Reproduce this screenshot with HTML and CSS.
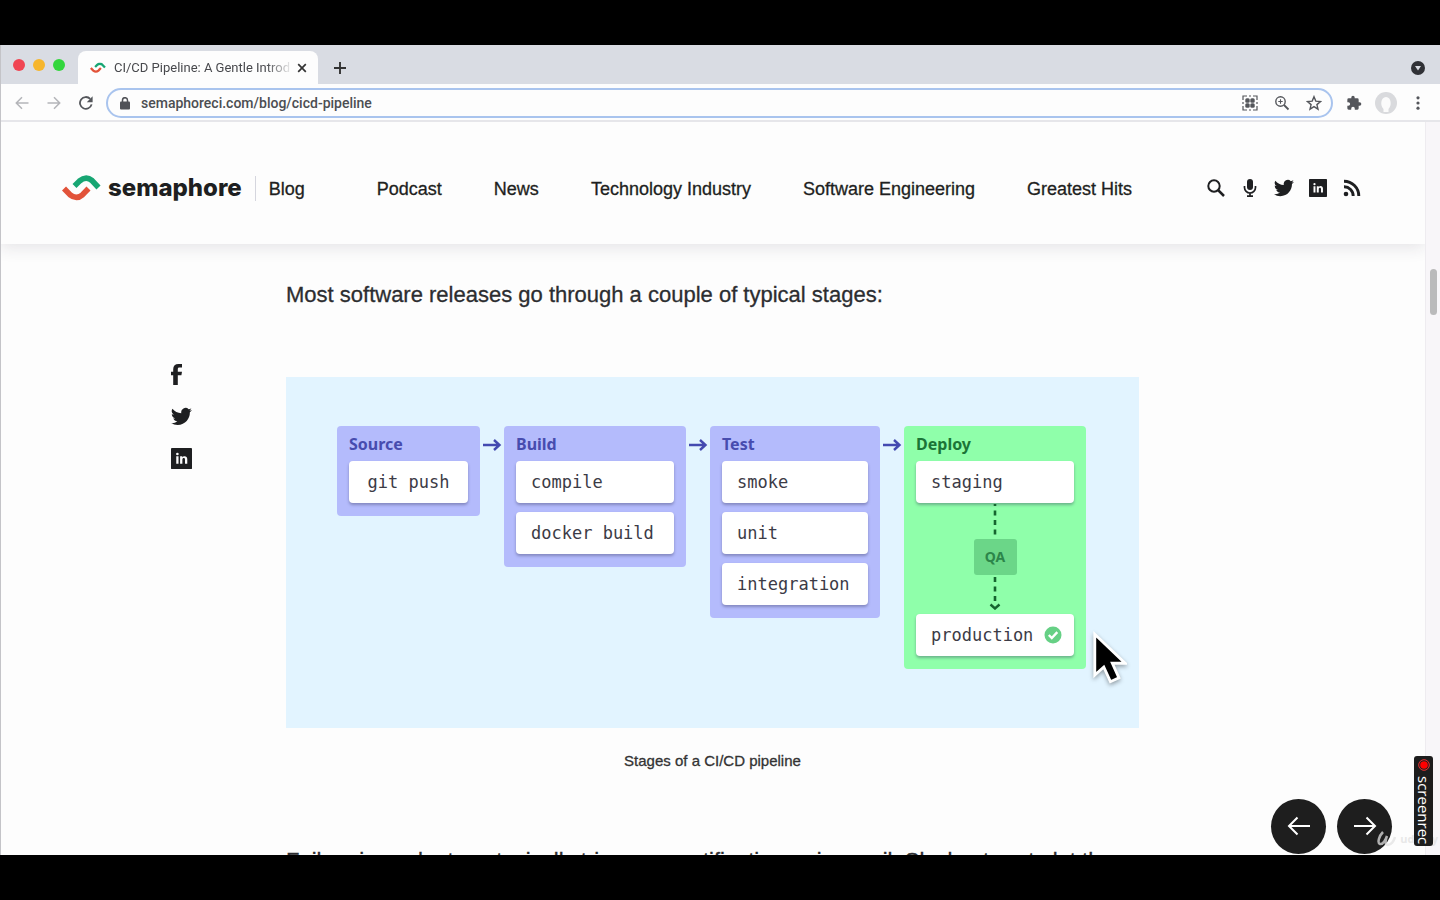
FILE: index.html
```html
<!DOCTYPE html>
<html lang="en">
<head>
<meta charset="utf-8">
<title>CI/CD Pipeline: A Gentle Introduction</title>
<link rel="stylesheet" href="styles.css">
</head>
<body>
<svg class="defs" aria-hidden="true">
  <symbol id="swirl" viewBox="0 0 39 27">
    <path d="M12.5 11 L17.5 6 Q24 .5 30 5.500 L36.500 12.500" fill="none" stroke="#17a673" stroke-width="5.600"/>
    <path d="M2 13.500 L8 19.800 Q14.500 25 20.500 19.800 L26.500 13.500" fill="none" stroke="#e2533a" stroke-width="5.600"/>
  </symbol>
  <symbol id="twitter" viewBox="0 0 24 24"><path d="M23.95 4.57a10 10 0 0 1-2.82.78 4.96 4.96 0 0 0 2.16-2.73c-.95.56-2 .96-3.13 1.19a4.92 4.92 0 0 0-8.38 4.48C7.69 8.1 4.07 6.13 1.64 3.16a4.92 4.92 0 0 0 1.52 6.57 4.9 4.9 0 0 1-2.23-.61v.06a4.92 4.92 0 0 0 3.95 4.83 5 5 0 0 1-2.21.08 4.94 4.94 0 0 0 4.6 3.42A9.87 9.87 0 0 1 0 19.54a14 14 0 0 0 7.55 2.21c9.05 0 14-7.5 14-13.98l-.02-.63a9.94 9.94 0 0 0 2.42-2.57z"/></symbol>
  <symbol id="linkedin" viewBox="0 0 24 24"><path fill-rule="evenodd" d="M1 0h22Q24 0 24 1v22q0 1-1 1h-22Q0 24 0 23v-22Q0 0 1 0zM6 9.500V18h2.600V9.500zM7.300 5.400a1.500 1.500 0 1 0 0 3 1.500 1.500 0 0 0 0-3zM10.400 9.500V18H13v-4.500c0-1.300.6-2 1.600-2s1.400.7 1.400 2V18h2.600v-5.200c0-2.300-1.200-3.500-3-3.500-1.200 0-2.100.5-2.600 1.400V9.500z"/></symbol>
  <symbol id="arrow" viewBox="0 0 20 16"><path d="M1 8h16M12 3l5.500 5-5.500 5" fill="none" stroke="currentColor" stroke-width="2.400"/></symbol>
  <symbol id="thin-arrow" viewBox="0 0 24 20"><path d="M1 10h21M13.500 1.500 22 10l-8.500 8.500" fill="none" stroke="currentColor" stroke-width="2"/></symbol>
</svg>

<div class="browser">
  <div class="tabstrip">
    <div class="lights"><i class="light red"></i><i class="light yellow"></i><i class="light green"></i></div>
    <div class="tab">
      <svg class="favicon" viewBox="0 0 39 27"><use href="#swirl"/></svg>
      <span class="tab-title">CI/CD Pipeline: A Gentle Introd</span>
      <button class="icon-btn close" aria-label="Close tab"><svg viewBox="0 0 10 10"><path d="M1.200 1.200l7.600 7.600M8.800 1.200L1.200 8.800" stroke="currentColor" stroke-width="1.700"/></svg></button>
    </div>
    <button class="icon-btn new-tab" aria-label="New tab"><svg viewBox="0 0 12 12"><path d="M6 0v12M0 6h12" stroke="currentColor" stroke-width="1.900"/></svg></button>
    <button class="icon-btn search-tabs" aria-label="Search tabs"><svg viewBox="0 0 14 14"><circle cx="7" cy="7" r="7" fill="#303136"/><path d="M4 5h6L7 9.500z" fill="#d9dce3"/></svg></button>
  </div>

  <div class="toolbar">
    <button class="icon-btn nav-btn dim" aria-label="Back"><svg viewBox="0 0 14 14"><path d="M13.500 7H1.500M7 1.200 1.300 7 7 12.800" fill="none" stroke="currentColor" stroke-width="1.500"/></svg></button>
    <button class="icon-btn nav-btn dim" aria-label="Forward"><svg viewBox="0 0 14 14"><path d="M.5 7h12M7 1.200 12.700 7 7 12.800" fill="none" stroke="currentColor" stroke-width="1.500"/></svg></button>
    <button class="icon-btn nav-btn" aria-label="Reload"><svg viewBox="0 0 14 14"><path d="M12.600 8.400A5.900 5.900 0 1 1 11.200 2.900" fill="none" stroke="currentColor" stroke-width="1.800"/><path d="M13.600.3v5.900H7.800z" fill="currentColor"/></svg></button>
    <div class="omnibox">
      <svg class="lock" viewBox="0 0 10 13"><rect y="4.500" width="10" height="8" rx="1" fill="currentColor"/><path d="M2.500 5V3.200a2.500 2.500 0 0 1 5 0V5" fill="none" stroke="currentColor" stroke-width="1.500"/></svg>
      <input class="url" type="text" aria-label="Address" value="semaphoreci.com/blog/cicd-pipeline">
      <button class="icon-btn" aria-label="QR code"><svg viewBox="0 0 16 16"><g fill="none" stroke="currentColor" stroke-width="1.200"><path d="M1 5V1h4M11 1h4v4M15 11v4h-4M5 15H1v-4M7 1h2M7 15h2M1 7v2M15 7v2"/></g><g fill="currentColor"><rect x="3.300" y="3.300" width="4.400" height="4.400" rx="1.500"/><rect x="8.300" y="3.300" width="4.400" height="4.400" rx="1.500"/><rect x="3.300" y="8.300" width="4.400" height="4.400" rx="1.500"/><rect x="8.300" y="8.300" width="4.400" height="4.400" rx="1.500"/></g></svg></button>
      <button class="icon-btn" aria-label="Zoom"><svg viewBox="0 0 16 16"><g fill="none" stroke="currentColor"><circle cx="6.500" cy="6.500" r="4.700" stroke-width="1.400"/><path d="M10 10l4.500 4.500" stroke-width="1.800"/><path d="M4.300 6.500h4.400M6.500 4.300v4.400" stroke-width="1.100"/></g></svg></button>
      <button class="icon-btn" aria-label="Bookmark"><svg viewBox="0 0 16 16"><path d="M8 1.700l1.800 4.400 4.700.4-3.600 3.100 1.100 4.600L8 11.700l-4 2.500 1.100-4.600-3.600-3.100 4.700-.4z" fill="none" stroke="currentColor" stroke-width="1.400"/></svg></button>
    </div>
    <button class="icon-btn" aria-label="Extensions"><svg viewBox="0 0 24 24"><path fill="currentColor" d="M20.500 11H19V7a2 2 0 0 0-2-2h-4V3.500a2.500 2.500 0 0 0-5 0V5H4a2 2 0 0 0-2 2v3.800h1.500a2.700 2.700 0 0 1 0 5.400H2V20a2 2 0 0 0 2 2h3.800v-1.500a2.700 2.700 0 0 1 5.400 0V22H17a2 2 0 0 0 2-2v-4h1.500a2.500 2.500 0 0 0 0-5z"/></svg></button>
    <button class="icon-btn avatar" aria-label="Profile"><svg viewBox="0 0 22 22"><circle cx="11" cy="11" r="11" fill="#d9dadd"/><path d="M8.500 20v-3C5 14 5.500 5 11 5s6 9 2.500 12v3z" fill="#fbfbfb"/></svg></button>
    <button class="icon-btn" aria-label="Menu"><svg viewBox="0 0 16 16"><g fill="currentColor"><circle cx="8" cy="2.800" r="1.600"/><circle cx="8" cy="8" r="1.600"/><circle cx="8" cy="13.200" r="1.600"/></g></svg></button>
  </div>

  <div class="viewport">
    <div class="page">
      <header class="site-header">
        <a class="brand" href="#"><svg class="brand-mark" viewBox="0 0 39 27"><use href="#swirl"/></svg>semaphore</a>
        <a class="blog" href="#">Blog</a>
        <nav class="links">
          <a href="#">Podcast</a><a href="#">News</a><a href="#">Technology Industry</a><a href="#">Software Engineering</a><a href="#">Greatest Hits</a>
        </nav>
        <div class="social">
          <a href="#" aria-label="Search"><svg viewBox="0 0 18 18"><circle cx="7" cy="7" r="5.700" fill="none" stroke="currentColor" stroke-width="2"/><path d="M11 11l6 6" stroke="currentColor" stroke-width="2.500"/></svg></a>
          <a href="#" aria-label="Podcast feed"><svg viewBox="0 0 18 18"><rect x="6" y="0" width="6" height="11" rx="3" fill="currentColor"/><path d="M3.500 7v1.500a5.500 5.500 0 0 0 11 0V7M9 14v3M6 17.100h6" fill="none" stroke="currentColor" stroke-width="1.700"/></svg></a>
          <a class="large" href="#" aria-label="Twitter"><svg viewBox="0 0 24 24"><use href="#twitter" fill="currentColor"/></svg></a>
          <a href="#" aria-label="LinkedIn"><svg viewBox="0 0 24 24"><use href="#linkedin" fill="currentColor"/></svg></a>
          <a href="#" aria-label="RSS"><svg viewBox="0 0 18 18"><circle cx="3" cy="15" r="2.300" fill="currentColor"/><path d="M1 7.800a9 9 0 0 1 9.200 9.200M1 2.200A14.800 14.800 0 0 1 15.800 17" fill="none" stroke="currentColor" stroke-width="2.900"/></svg></a>
        </div>
      </header>

      <main class="article">
        <aside class="share">
          <a href="#" aria-label="Share on Facebook"><svg class="fb" viewBox="0 0 11 21"><path fill="currentColor" d="M2.200 21V11.200H0V7.700h2.200V5.200C2.200 1.800 4.200 0 7.500 0H11v3.500H8.500c-1.300 0-1.700.6-1.700 1.800v2.400H11l-.6 3.500H6.800V21z"/></svg></a>
          <a href="#" aria-label="Share on Twitter"><svg viewBox="0 0 24 24"><use href="#twitter" fill="currentColor"/></svg></a>
          <a href="#" aria-label="Share on LinkedIn"><svg viewBox="0 0 24 24"><use href="#linkedin" fill="currentColor"/></svg></a>
        </aside>
        <div class="post">
          <p>Most software releases go through a couple of typical stages:</p>
          <figure class="figure">
            <div class="diagram">
              <section class="stage source"><h3>Source</h3><div class="step">git push</div></section>
              <svg class="arrow" viewBox="0 0 20 16"><use href="#arrow"/></svg>
              <section class="stage build"><h3>Build</h3><div class="step">compile</div><div class="step">docker build</div></section>
              <svg class="arrow" viewBox="0 0 20 16"><use href="#arrow"/></svg>
              <section class="stage test"><h3>Test</h3><div class="step">smoke</div><div class="step">unit</div><div class="step">integration</div></section>
              <svg class="arrow" viewBox="0 0 20 16"><use href="#arrow"/></svg>
              <section class="stage deploy"><h3>Deploy</h3><div class="step">staging</div>
                <div class="gate">
                  <svg class="dash" viewBox="0 0 12 35"><path d="M6 0v33" stroke="#15652f" stroke-width="2.600" stroke-dasharray="5 4.500" stroke-dashoffset="3"/></svg>
                  <span class="qa">QA</span>
                  <svg class="dash" viewBox="0 0 12 35"><path d="M6 2v26" stroke="#15652f" stroke-width="2.600" stroke-dasharray="5 4.500"/><path d="M1.500 29.500 6 33.500l4.500-4" fill="none" stroke="#15652f" stroke-width="2.400"/></svg>
                </div>
                <div class="step">production<svg class="check" viewBox="0 0 18 18"><circle cx="9" cy="9" r="8.500" fill="#66d085"/><path d="M4.800 9l3 3 5.500-5.800" fill="none" stroke="#fff" stroke-width="2.400"/></svg></div>
              </section>
              <svg class="pointer" viewBox="0 0 38 56"><path d="M4 3v43l9.500-8.500 7 15.500 9-4-7-15.500H36z" fill="#000" stroke="#fff" stroke-width="3"/></svg>
            </div>
            <figcaption>Stages of a CI/CD pipeline</figcaption>
          </figure>
          <p>Failure in each stage typically triggers a notification—via email, Slack, etc.—to let the responsible developers know about the cause.</p>
        </div>
      </main>
    </div>
    <div class="scrollbar"><div class="thumb"></div></div>
    <div class="pager">
      <button class="round" aria-label="Previous"><svg class="flip" viewBox="0 0 24 20"><use href="#thin-arrow"/></svg></button>
      <button class="round" aria-label="Next"><svg viewBox="0 0 24 20"><use href="#thin-arrow"/></svg></button>
    </div>
    <div class="watermark"><svg viewBox="0 0 20 16"><path d="M7 1C3 5 1 12 4 13s6-5 7-8c-2 5-2 9 1 9s6-4 7-8" fill="none" stroke="currentColor" stroke-width="2.500"/></svg>udemy</div>
    <div class="recorder"><svg viewBox="0 0 12 12"><circle cx="6" cy="6" r="5.300" fill="none" stroke="#e33" stroke-width="1"/><circle cx="6" cy="6" r="3.800" fill="#f00"/></svg>screenrec</div>
  </div>
</div>
</body>
</html>
```
FILE: styles.css
```css
* { box-sizing: border-box; }
body {
  margin: 0;
  height: 100vh;
  padding: 45px 0;
  background: #000;
  color: #1e1f21;
  font-family: "Liberation Sans", Arial, sans-serif;
  overflow: hidden;
}
a { color: inherit; text-decoration: none; }
svg { display: block; }
.defs { position: absolute; width: 0; height: 0; }
.browser {
  position: relative;
  height: 100%;
  display: flex;
  flex-direction: column;
  background: #fdfdfd;
}
.browser::before {
  content: "";
  position: absolute;
  inset: 0 auto 0 0;
  z-index: 1;
  width: 1px;
  background: #c4c4c8;
}
.icon-btn {
  display: flex;
  flex: none;
  padding: 0;
  border: 0;
  background: none;
  color: #54565b;
}
.icon-btn svg { width: 16px; height: 16px; }

/* Tab strip */
.tabstrip {
  display: flex;
  align-items: center;
  height: 39px;
  flex: none;
  padding: 6px 15px 0 13px;
  background: #d9dce3;
}
.lights { display: flex; gap: 8px; padding-bottom: 6px; }
.light { width: 12px; height: 12px; border-radius: 50%; }
.red { background: #f04553; }
.yellow { background: #f6b62d; }
.green { background: #33d63d; }
.tab {
  display: flex;
  align-items: center;
  align-self: stretch;
  width: 240px;
  margin-left: 13px;
  padding: 0 11px 0 12px;
  border-radius: 8px 8px 0 0;
  background: #fdfdfd;
}
.favicon { width: 16px; height: 12px; flex: none; }
.tab-title {
  flex: 1;
  margin: 0 4px 0 8px;
  overflow: hidden;
  white-space: nowrap;
  font: 13px/20px Roboto, sans-serif;
  color: #48494d;
  mask-image: linear-gradient(90deg, #000 85%, transparent);
}
.close svg { width: 10px; height: 10px; color: #333; }
.new-tab { margin-left: 16px; color: #333; }
.new-tab svg { width: 12px; height: 12px; }
.search-tabs { margin-left: auto; }
.search-tabs svg { width: 14px; height: 14px; }

/* Toolbar */
.toolbar {
  display: flex;
  align-items: center;
  gap: 13px;
  height: 38px;
  flex: none;
  padding: 2px 14px 0 15px;
  border-bottom: 2px solid #e6e6ea;
}
.nav-btn { margin-right: 5px; }
.nav-btn svg { width: 14px; height: 14px; }
.dim { color: #b4b5b9; }
.omnibox {
  display: flex;
  align-items: center;
  gap: 16px;
  flex: 1;
  height: 30px;
  margin-left: -5px;
  padding: 0 9px 0 12px;
  border: 2px solid #a9c4ee;
  border-radius: 15px;
}
.lock { width: 10px; height: 13px; color: #505257; }
.url {
  flex: 1;
  min-width: 0;
  margin-left: -5px;
  padding: 0;
  border: 0;
  outline: 0;
  background: none;
  font: 500 14px/20px Roboto, sans-serif;
  color: #4c4e52;
}
.avatar svg { width: 22px; height: 22px; }

/* Page */
.viewport {
  position: relative;
  display: flex;
  flex: 1;
  min-height: 0;
}
.page { flex: 1; min-width: 0; overflow: hidden; }
.scrollbar {
  width: 15px;
  padding: 147px 3px 0 4px;
  background: #f8f6f9;
  border-left: 1px solid #eeecf0;
}
.thumb { height: 46px; border-radius: 4px; background: #bababb; }
.site-header {
  display: flex;
  align-items: center;
  height: 122px;
  padding: 10px 64px 0 62px;
  box-shadow: 0 3px 16px rgba(40, 30, 60, 0.12);
  font-size: 18px;
  line-height: 24px;
  -webkit-text-stroke: 0.3px currentColor;
}
.brand {
  display: flex;
  align-items: center;
  gap: 7px;
  padding-right: 13px;
  font: 800 24px/24px Inter, sans-serif;
  -webkit-text-stroke: 0;
}
.brand-mark { width: 39px; height: 27px; }
.blog { padding-left: 13px; border-left: 1px solid #d5d6de; }
.links { display: flex; gap: 52px; margin-left: 72px; white-space: nowrap; }
.blog, .links a { padding-top: 1px; }
.social { display: flex; align-items: center; margin-left: auto; gap: 16px; }
.social svg { width: 18px; height: 18px; }
.social .large svg { width: 20px; height: 20px; margin: 0 -1px; }

.article { display: grid; grid-template-columns: 1fr minmax(0, 853px) 1fr; padding-top: 33px; }
.share {
  display: flex;
  flex-direction: column;
  gap: 21px;
  padding: 87px 0 0 171px;
}
.share svg { width: 21px; height: 21px; }
.share .fb { width: 11px; }
.post p {
  margin: 0;
  font-size: 22px;
  line-height: 36px;
  color: #2c2d30;
  -webkit-text-stroke: 0.3px currentColor;
}
.figure { margin: 64px 0 70px; }
figcaption {
  margin-top: 21px;
  text-align: center;
  font-size: 15px;
  line-height: 24px;
  color: #333;
  -webkit-text-stroke: 0.3px currentColor;
}

/* Pipeline diagram */
.diagram {
  position: relative;
  display: flex;
  justify-content: center;
  align-items: flex-start;
  height: 351px;
  padding: 49px 2px 0 0;
  background: #e2f4ff;
}
.arrow { width: 20px; height: 16px; margin: 11px 2px 0; color: #4349b0; }
.stage {
  display: flex;
  flex-direction: column;
  gap: 9px;
  padding: 0 12px 13px;
  border-radius: 4px;
  background: #b4bbfc;
}
.source { width: 143px; }
.source .step { justify-content: center; padding: 0; }
.build, .deploy { width: 182px; }
.test { width: 170px; }
.deploy { gap: 0; background: #8fffaa; }
.stage h3 {
  margin: 0 0 -9px;
  padding-top: 6px;
  height: 35px;
  font: 700 16px/24px "Noto Sans", sans-serif;
  color: #474caf;
}
.deploy h3 { margin: 0; color: #1b7537; }
.step {
  display: flex;
  align-items: center;
  justify-content: space-between;
  height: 42px;
  padding: 0 12px 0 15px;
  border-radius: 4px;
  background: #fff;
  box-shadow: 0 2px 3px rgba(40, 40, 80, 0.35);
  font: 17px/24px "DejaVu Sans Mono", monospace;
  color: #3c3b46;
  white-space: nowrap;
}
.gate { display: flex; flex-direction: column; align-items: center; height: 111px; padding-top: 1px; }
.dash { width: 12px; height: 35px; }
.qa {
  width: 43px;
  height: 36px;
  border-radius: 3px;
  background: #6bd688;
  font: 700 14px/36px "Noto Sans", sans-serif;
  text-align: center;
  color: #2c854a;
}
.check { width: 18px; height: 18px; }
.pointer {
  position: absolute;
  right: 12px;
  top: 253px;
  width: 36px;
  height: 56px;
  filter: drop-shadow(0 2px 2px rgba(0, 0, 0, 0.35));
}

/* Overlays */
.pager { position: absolute; right: 48px; bottom: 1px; display: flex; gap: 11px; }
.round {
  display: grid;
  place-items: center;
  width: 55px;
  height: 55px;
  padding: 0 0 2px;
  border: 0;
  border-radius: 50%;
  background: #1e1e1e;
  color: #fff;
}
.round svg { width: 24px; height: 20px; }
.flip { transform: scaleX(-1); }
.watermark {
  position: absolute;
  right: 2px;
  bottom: 6px;
  display: flex;
  align-items: center;
  gap: 4px;
  font: 700 11px/20px "Open Sans", sans-serif;
  color: rgba(225, 225, 225, 0.75);
}
.watermark svg { width: 20px; height: 16px; }
.recorder {
  position: absolute;
  right: 7px;
  bottom: 9px;
  display: flex;
  align-items: center;
  gap: 5px;
  width: 19px;
  height: 90px;
  padding-top: 3px;
  border-radius: 3px;
  background: #1d1d1d;
  writing-mode: vertical-rl;
  font: 15px/19px "Open Sans", sans-serif;
  color: #fff;
}
.recorder svg { width: 12px; height: 12px; flex: none; }
```
